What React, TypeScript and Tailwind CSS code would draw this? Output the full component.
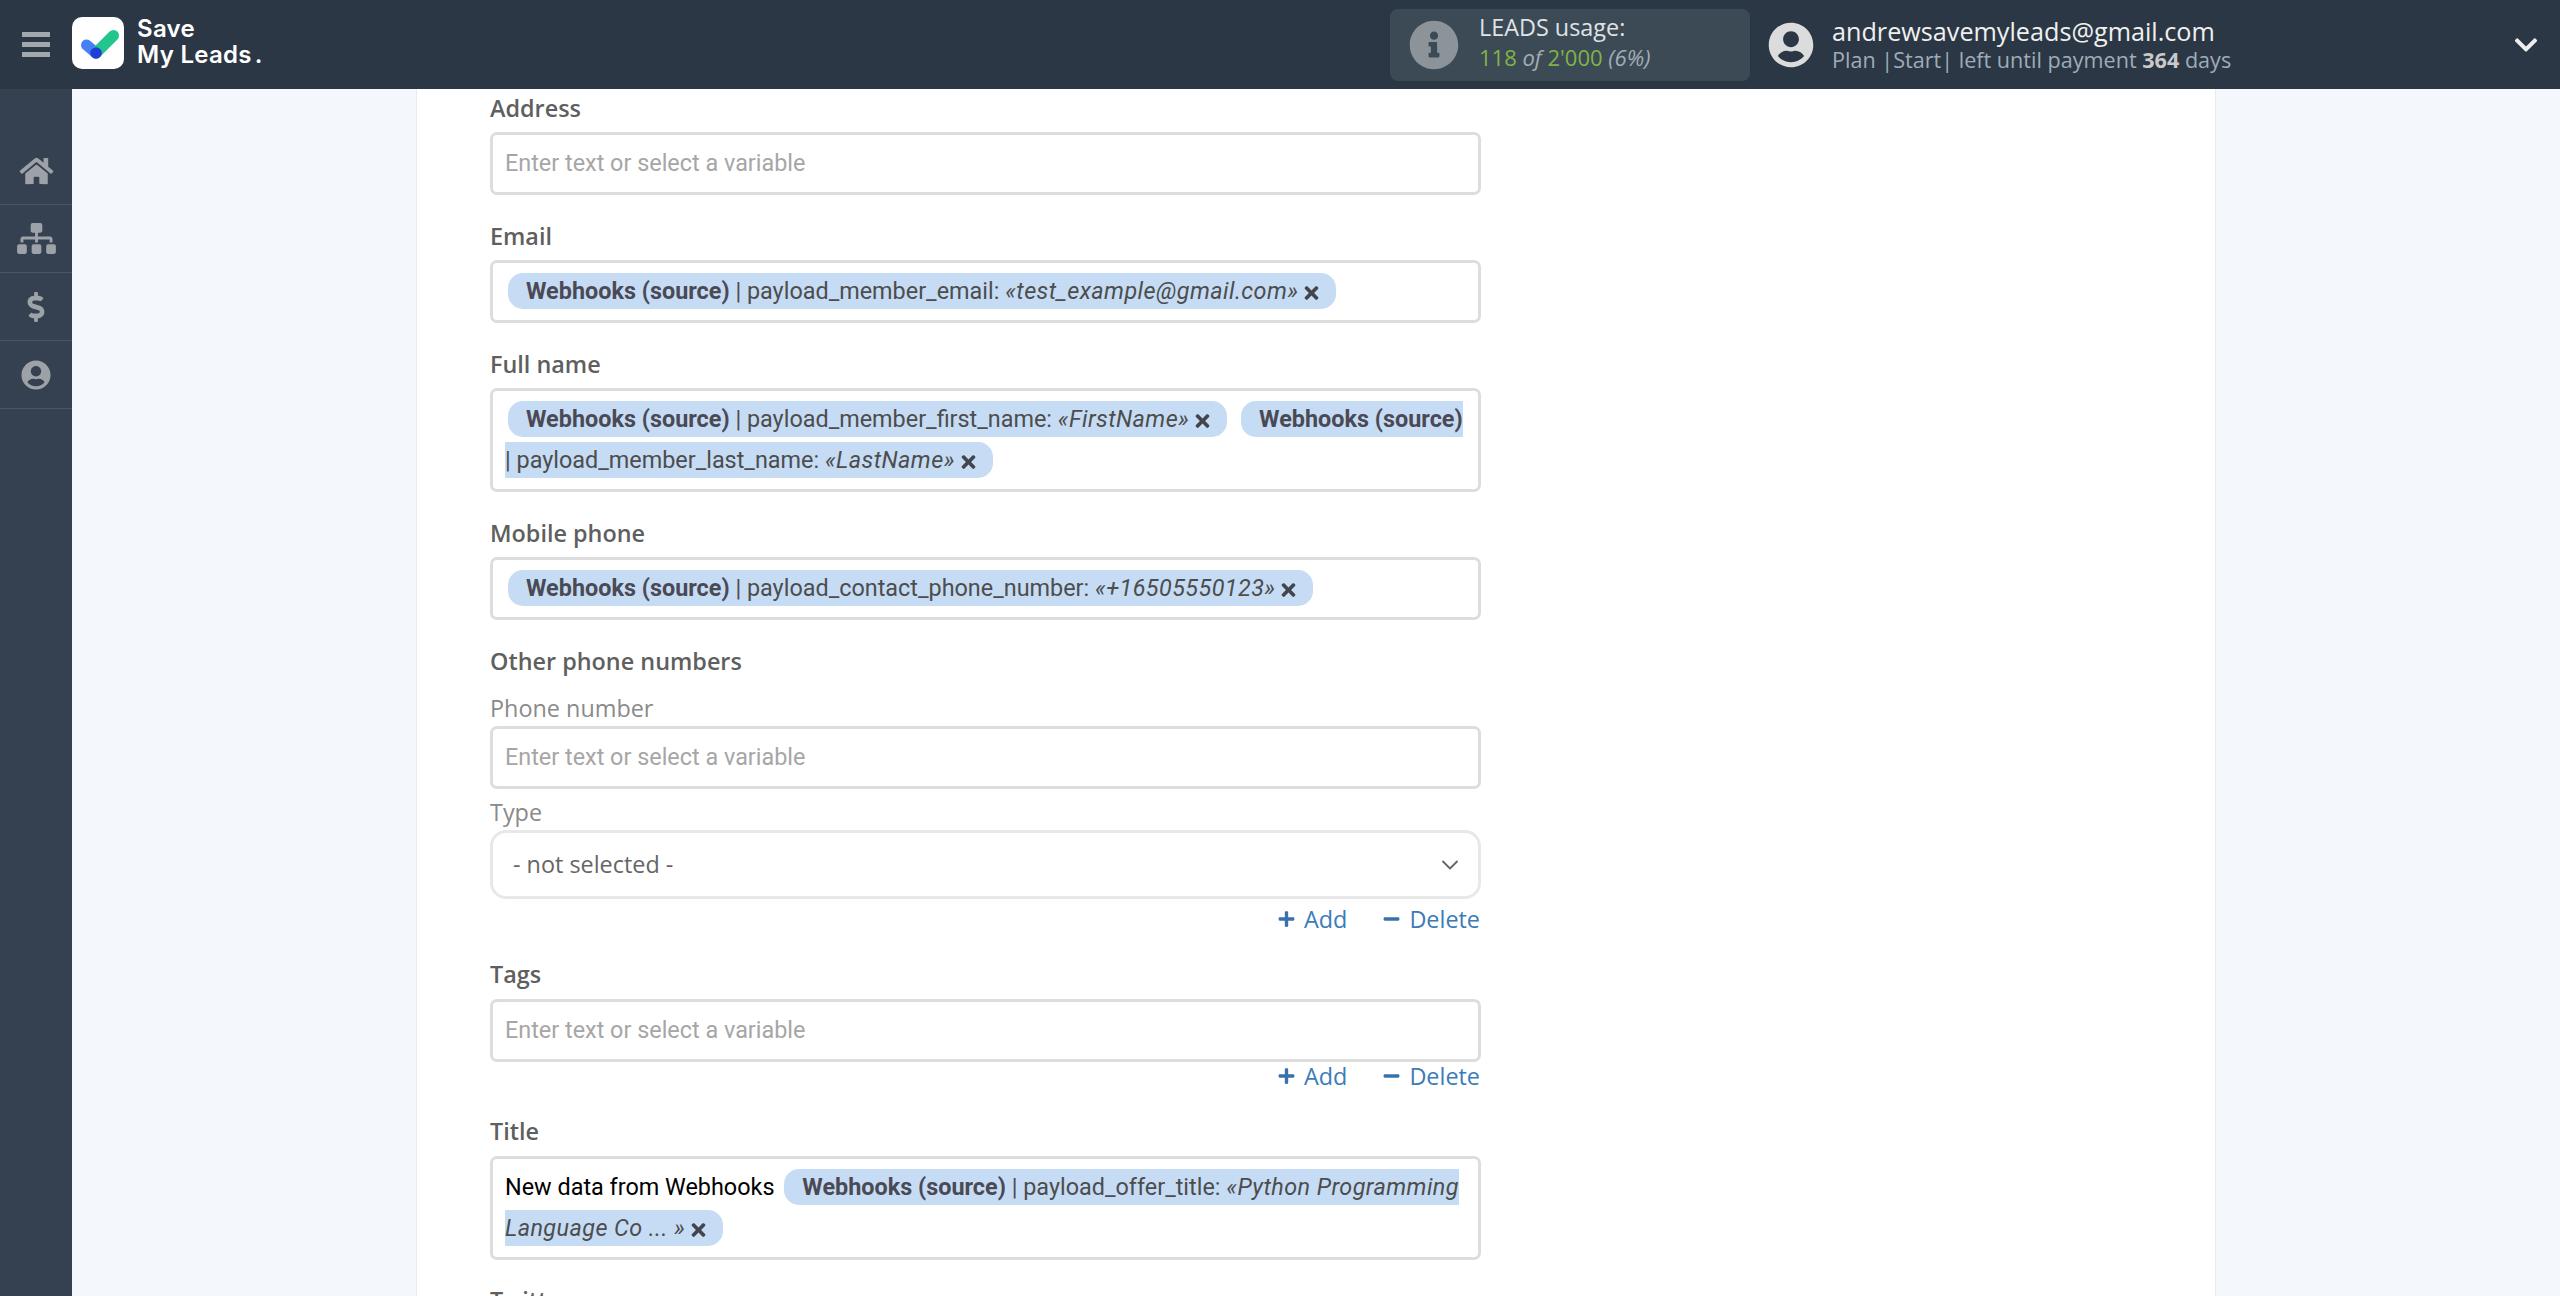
import type { ReactNode } from "react";
import { ChevronDown } from "lucide-react";
import {
  FaChevronDown,
  FaDollarSign,
  FaHome,
  FaInfoCircle,
  FaMinus,
  FaPlus,
  FaSitemap,
  FaTimes,
  FaUserCircle,
} from "react-icons/fa";

const navItems = [
  { icon: <FaHome className="h-[30px] w-[35px]" />, key: "home" },
  { icon: <FaSitemap className="h-[31px] w-[39px]" />, key: "flows" },
  { icon: <FaDollarSign className="h-[30px] w-[20px]" />, key: "billing" },
  { icon: <FaUserCircle className="h-[30px] w-[30px]" />, key: "account" },
];

function Logo() {
  return (
    <svg viewBox="0 0 52 52" className="h-[52px] w-[52px] shrink-0">
      <rect width="52" height="52" rx="10" fill="#fff" />
      <path d="M14.5 28 24 36" stroke="#4580f7" strokeWidth="11" strokeLinecap="round" />
      <path d="M24 36 41.5 18.5" stroke="#22c58b" strokeWidth="11" strokeLinecap="round" />
      <circle cx="24" cy="36" r="5.8" fill="#1f3fd6" />
    </svg>
  );
}

function Header() {
  return (
    <header className="flex h-[89px] shrink-0 items-center bg-[#2c3745] font-['Open_Sans',sans-serif]">
      <div className="ml-[22px] flex w-[28px] flex-col gap-[5.5px]">
        <span className="h-[4.5px] bg-[#a3a8ad]" />
        <span className="h-[4.5px] bg-[#a3a8ad]" />
        <span className="h-[4.5px] bg-[#a3a8ad]" />
      </div>
      <div className="ml-[22px] mb-[4px]">
        <Logo />
      </div>
      <div className="mb-[6px] ml-[13px] w-[125px] shrink-0 font-['Inter',sans-serif] text-[24px] leading-[26px] font-semibold tracking-[0.3px] whitespace-nowrap text-white">
        <div>Save</div>
        <div>
          My Leads<span className="ml-[3px]">.</span>
        </div>
      </div>

      <div className="ml-[1128px] flex h-[72px] w-[360px] items-center rounded-lg bg-[#3c4a56] pl-[19px]">
        <FaInfoCircle className="h-[50px] w-[50px] shrink-0 text-[#8c9499]" />
        <div className="mb-[5px] ml-[20px] text-[23.4px]">
          <div className="leading-[30px] text-[#dfe3e6]">LEADS usage:</div>
          <div className="text-[22px] leading-[30px] text-[#7fb446]">
            118 <i className="text-[#a2adb5]">of</i> 2'000 <i className="text-[#a2adb5]">(6%)</i>
          </div>
        </div>
      </div>

      <FaUserCircle className="ml-[18px] h-[46px] w-[46px] shrink-0 text-[#dcdcdc]" />
      <div className="mb-[2px] ml-[18px] w-[600px] shrink-0">
        <div className="text-[25.2px] leading-[32px] text-[#f0f0f0]">andrewsavemyleads@gmail.com</div>
        <div className="text-[21.6px] leading-[26px] text-[#9eacb8]">
          Plan |Start| left until payment <b className="font-bold text-[#c9c9c9]">364</b> days
        </div>
      </div>
      <FaChevronDown className="ml-[82px] h-[26px] w-[24px] shrink-0 text-[#eeeeee]" />
    </header>
  );
}

function Sidebar() {
  return (
    <aside className="w-[72px] shrink-0 bg-[#354150] pt-[48px] text-[#9ca2a8]">
      {navItems.map((item) => (
        <div key={item.key} className="flex h-[68px] items-center justify-center border-b-[1.5px] border-[#4b5665]">
          {item.icon}
        </div>
      ))}
    </aside>
  );
}

function Chip({ name, value }: { name: string; value: string }) {
  return (
    <span className="ml-[3px] rounded-[15px] bg-[#c6dcf5] py-[4px] pr-[17px] pl-[18px] text-[#4d4d4d]">
      <b className="font-bold text-[#4a4a55]">Webhooks (source)</b> | {name}: <i className="tracking-[0.42px]">{value}</i>
      <FaTimes className="ml-[6px] inline h-[20px] w-[15px] text-[#44444c]" />
    </span>
  );
}

function Box({ children }: { children?: ReactNode }) {
  return (
    <div className="rounded-[7px] border-[3px] border-[#dddddd] bg-white px-[12px] py-[8px] font-['Roboto',sans-serif] text-[23.4px] leading-[41px]">
      {children ?? <span className="text-[#a6a6a6]">Enter text or select a variable</span>}
    </div>
  );
}

function Label({ children, className }: { children: ReactNode; className: string }) {
  return <div className={`text-[23.4px] leading-[30px] font-semibold text-[#5f5f5f] ${className}`}>{children}</div>;
}

function Actions({ className }: { className: string }) {
  return (
    <div className={`flex justify-end pr-[1px] text-[23.4px] leading-[30px] text-[#3b7cb8] ${className}`}>
      <span className="flex items-center">
        <FaPlus className="h-[18px] w-[19px] text-[#3872aa]" />
        <span className="ml-[8px]">Add</span>
      </span>
      <span className="ml-[35px] flex items-center">
        <FaMinus className="h-[18px] w-[19px] text-[#3872aa]" />
        <span className="ml-[8px]">Delete</span>
      </span>
    </div>
  );
}

export default function App() {
  return (
    <div className="flex h-screen flex-col overflow-hidden">
      <Header />
      <div className="flex min-h-0 flex-1">
        <Sidebar />
        <main className="min-w-0 flex-1 bg-[#f4f7fc]">
          <div className="ml-[344px] h-full w-[1800px] overflow-hidden border-x-[1.5px] border-[#e9ebee] bg-white pt-[4px] pl-[73px] font-['Open_Sans',sans-serif]">
            <div className="w-[991px]">
              <Label className="mb-[9px]">Address</Label>
              <Box />

              <Label className="mt-[26px] mb-[9px]">Email</Label>
              <Box>
                <Chip name="payload_member_email" value="«test_example@gmail.com»" />
              </Box>

              <Label className="mt-[26px] mb-[9px]">Full name</Label>
              <Box>
                <Chip name="payload_member_first_name" value="«FirstName»" />{" "}
                <span className="ml-[5px]" />
                <Chip name="payload_member_last_name" value="«LastName»" />
              </Box>

              <Label className="mt-[26px] mb-[9px]">Mobile phone</Label>
              <Box>
                <Chip name="payload_contact_phone_number" value="«+16505550123»" />
              </Box>

              <Label className="mt-[26px]">Other phone numbers</Label>
              <div className="mt-[17px] mb-[3px] text-[23.4px] leading-[30px] text-[#8a8a8a]">Phone number</div>
              <Box />
              <div className="mt-[8px] mb-[3px] text-[23.4px] leading-[30px] text-[#8a8a8a]">Type</div>
              <div className="flex h-[69px] items-center justify-between rounded-[16px] border-[3px] border-[#e8e8e8] bg-white pr-[14px] pl-[20px] text-[23.4px] text-[#666666]">
                <span>- not selected -</span>
                <ChevronDown className="h-[28px] w-[28px] text-[#666666]" strokeWidth={1.6} />
              </div>
              <Actions className="mt-[5px]" />

              <Label className="mt-[25px] mb-[10px]">Tags</Label>
              <Box />
              <Actions className="-mt-[1px]" />

              <Label className="mt-[25px] mb-[10px]">Title</Label>
              <Box>
                <span className="text-black">New data from Webhooks</span>{" "}
                <span className="ml-[1px]" />
                <Chip name="payload_offer_title" value="«Python Programming Language Co ... »" />
              </Box>

              <Label className="mt-[25px]">Twitter</Label>
            </div>
          </div>
        </main>
      </div>
    </div>
  );
}
